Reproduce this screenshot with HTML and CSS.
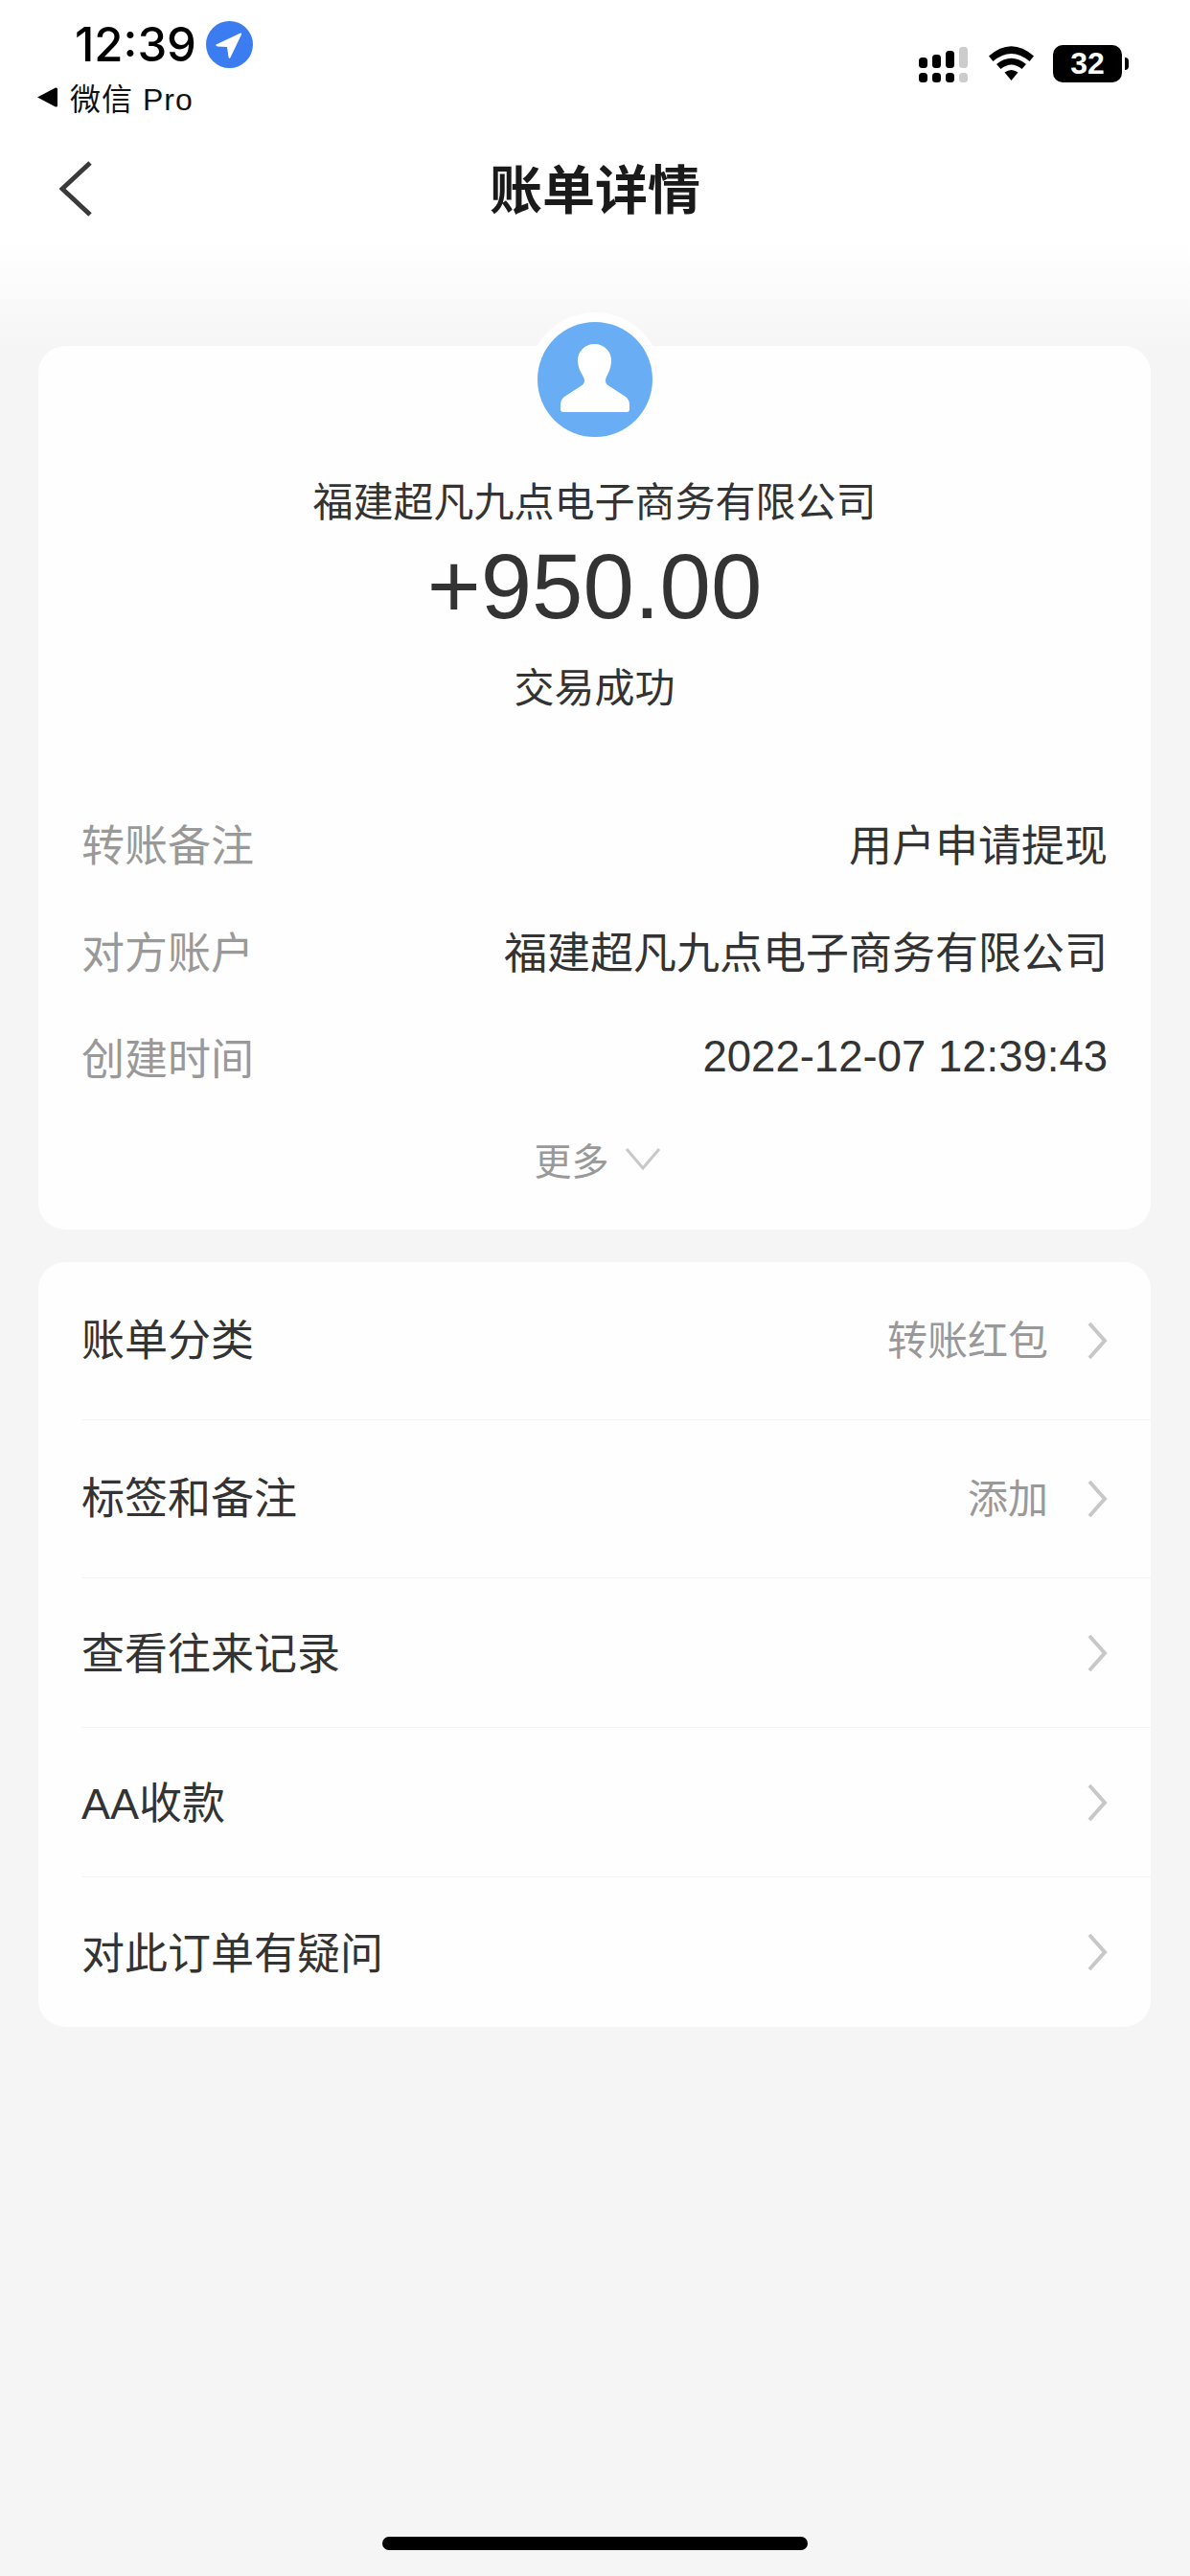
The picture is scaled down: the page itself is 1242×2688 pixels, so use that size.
FILE: index.html
```html
<!DOCTYPE html>
<html lang="zh-CN">
<head>
    <meta charset="UTF-8">
    <meta name="viewport" content="width=device-width, initial-scale=1.0">
    <title>账单详情</title>
    <link rel="stylesheet" href="styles.css">
</head>
<body>
    <div class="page">
        <header class="top">
            <div class="status">
                <div class="status-left">
                    <div class="clock-line">
                        <span class="clock">12:39</span>
                        <svg class="loc" width="49" height="49" viewBox="0 0 49 49">
                            <circle cx="24.5" cy="24.5" r="24.5" fill="#3b7cf0"></circle>
                            <path d="M10.5 24.5 L36 12.5 Q38 12 37 14 L25.5 38 Q24 40 23.5 37.5 L22 27 L12 26.5 Q9.5 25.5 10.5 24.5 Z" fill="#fff"></path>
                        </svg>
                    </div>
                    <div class="back-app">
                        <svg width="21" height="21" viewBox="0 0 21 21"><path d="M0 10.5 L19 0.5 Q21 0 21 2 L21 19 Q21 21 19 20.5 Z" fill="#000"></path></svg>
                        <span>微信 Pro</span>
                    </div>
                </div>
                <div class="status-right">
                    <svg width="51" height="38" viewBox="0 0 51 38">
                        <rect x="0" y="12" width="9" height="11" rx="3.5"></rect>
                        <rect x="14" y="9" width="9" height="14" rx="3.5"></rect>
                        <rect x="28" y="5" width="9" height="18" rx="3.5"></rect>
                        <rect x="42" y="1" width="9" height="22" rx="3.5" fill="#ccc"></rect>
                        <rect x="0" y="28" width="9" height="10" rx="3.5"></rect>
                        <rect x="14" y="28" width="9" height="10" rx="3.5"></rect>
                        <rect x="28" y="28" width="9" height="10" rx="3.5"></rect>
                        <rect x="42" y="28" width="9" height="10" rx="3.5" fill="#ccc"></rect>
                    </svg>
                    <svg class="wifi" width="47" height="36" viewBox="0 0 47 36">
                        <path d="M0 10.5 Q23.5 -10 47 10.5 L42.5 16 Q23.5 0 4.5 16 Z"></path>
                        <path d="M8 19 Q23.5 6.5 39 19 L34.5 24 Q23.5 15 12.5 24 Z"></path>
                        <path d="M16.5 27.5 Q23.5 22.5 30.5 27.5 L23.5 36 Z"></path>
                    </svg>
                    <div class="battery"><span>32</span></div>
                    <div class="nub"></div>
                </div>
            </div>
            <div class="navbar">
                <svg class="nav-back" width="34" height="58" viewBox="0 0 34 58">
                    <path d="M32 2 L3 29 L32 56" fill="none" stroke="#3a3a3a" stroke-width="5"></path>
                </svg>
                <h1>账单详情</h1>
            </div>
        </header>

        <main class="content">
            <section class="card summary">
                <div class="avatar">
                    <svg width="120" height="120" viewBox="0 0 120 120">
                        <circle cx="60" cy="60" r="60" fill="#69aef5"></circle>
                        <path d="M59.5 23 C70 23 77 31 77 40 C77 50 72 56 71 60 C71 64 72 65 75 67 L92 78 Q96 81 96 87 L96 91 Q96 94 93 94 L27 94 Q24 94 24 91 L24 87 Q24 81 28 78 L45 67 C48 65 49 64 49 60 C48 56 42 50 42 40 C42 31 49 23 59.5 23 Z" fill="#fff"></path>
                    </svg>
                </div>
                <div class="payee">福建超凡九点电子商务有限公司</div>
                <div class="amount">+950.00</div>
                <div class="state">交易成功</div>
                <div class="details">
                    <div class="detail"><span class="detail-label">转账备注</span><span>用户申请提现</span></div>
                    <div class="detail"><span class="detail-label">对方账户</span><span>福建超凡九点电子商务有限公司</span></div>
                    <div class="detail"><span class="detail-label">创建时间</span><span class="detail-time">2022-12-07 12:39:43</span></div>
                </div>
                <div class="more">
                    <span>更多</span>
                    <svg width="38" height="26" viewBox="0 0 38 26"><path d="M2 3 L19 23 L36 3" fill="none" stroke="#c8c8c8" stroke-width="3"></path></svg>
                </div>
            </section>

            <section class="card menu">
                <div class="row row-tall">
                    <span class="row-name">账单分类</span>
                    <span class="row-value">转账红包</span>
                    <svg class="arrow" width="22" height="42" viewBox="0 0 22 42"><path d="M2 3 L18 21 L2 39" fill="none" stroke="#c8c8c8" stroke-width="4"></path></svg>
                </div>
                <div class="row row-tall">
                    <span class="row-name">标签和备注</span>
                    <span class="row-value">添加</span>
                    <svg class="arrow" width="22" height="42" viewBox="0 0 22 42"><path d="M2 3 L18 21 L2 39" fill="none" stroke="#c8c8c8" stroke-width="4"></path></svg>
                </div>
                <div class="row">
                    <span class="row-name">查看往来记录</span>
                    <svg class="arrow" width="22" height="42" viewBox="0 0 22 42"><path d="M2 3 L18 21 L2 39" fill="none" stroke="#c8c8c8" stroke-width="4"></path></svg>
                </div>
                <div class="row">
                    <span class="row-name">AA收款</span>
                    <svg class="arrow" width="22" height="42" viewBox="0 0 22 42"><path d="M2 3 L18 21 L2 39" fill="none" stroke="#c8c8c8" stroke-width="4"></path></svg>
                </div>
                <div class="row row-last">
                    <span class="row-name">对此订单有疑问</span>
                    <svg class="arrow" width="22" height="42" viewBox="0 0 22 42"><path d="M2 3 L18 21 L2 39" fill="none" stroke="#c8c8c8" stroke-width="4"></path></svg>
                </div>
            </section>
        </main>

        <div class="home-bar"></div>
    </div>
</body>
</html>
```

FILE: styles.css
```css
* { box-sizing: border-box; }
body {
    margin: 0;
    font-family: "Liberation Sans", "Noto Sans CJK SC", sans-serif;
    color: #333;
    background-color: #f5f5f5;
}
.page { height: 2688px; display: flex; flex-direction: column; overflow: hidden; }

/* top area */
.top { height: 361px; background: linear-gradient(#fff 0, #fff 255px, #f6f6f6 355px, #f6f6f6 100%); }
.status { height: 162px; display: flex; justify-content: space-between; padding: 21px 64px 0 39px; }
.status-left { display: flex; flex-direction: column; }
.clock-line { display: flex; align-items: center; gap: 10px; padding-left: 39px; height: 50px; }
.clock { font-family: Inter, "Liberation Sans", sans-serif; font-size: 49px; font-weight: 500; color: #000; }
.back-app { display: flex; align-items: center; gap: 13px; margin-top: 12px; height: 36px; font-size: 32px; color: #111; letter-spacing: 1px; }
.status-right { display: flex; align-items: flex-start; padding-top: 27px; }
.status-right svg { fill: #000; }
.wifi { margin-left: 22px; }
.battery { width: 72px; height: 39px; margin-left: 20px; margin-top: -1px; border-radius: 10px; background-color: #000; color: #fff; font-size: 32px; font-weight: bold; display: flex; align-items: center; justify-content: center; }
.nub { width: 4px; height: 13px; margin: 12px 0 0 3px; background-color: #000; border-radius: 0 6px 6px 0; }

.navbar { height: 70px; display: flex; align-items: center; justify-content: center; position: relative; }
.navbar h1 { margin: 0 0 6px; font-size: 55px; font-weight: bold; color: #1a1a1a; }
.nav-back { position: absolute; left: 62px; top: 6px; }

/* cards */
.content { padding: 0 41px 0 40px; display: flex; flex-direction: column; gap: 34px; }
.card { background-color: #fefefe; border-radius: 28px; }
.summary { height: 922px; position: relative; padding: 0 45px; }
.avatar { position: absolute; left: 50%; top: -35px; margin-left: -70px; width: 140px; height: 140px; border-radius: 50%; background-color: #fefefe; display: flex; align-items: center; justify-content: center; }
.payee { padding-top: 134px; text-align: center; font-size: 42px; line-height: 60px; }
.amount { text-align: center; font-size: 96px; line-height: 110px; margin-top: 2px; }
.state { text-align: center; font-size: 42px; line-height: 60px; margin-top: 22px; }
.details { margin-top: 75px; }
.detail { display: flex; justify-content: space-between; align-items: center; height: 111.5px; font-size: 45px; }
.detail-label { color: #999; }
.detail-time { font-size: 45.5px; }
.more { display: flex; align-items: center; justify-content: center; gap: 16px; margin-top: 22px; padding-left: 6px; font-size: 39px; color: #999; }

/* menu */
.menu { padding-left: 45px; }
.row { height: 156px; display: flex; align-items: center; padding-right: 44px; border-bottom: 1px solid #f3f3f3; font-size: 45px; }
.row-tall { height: 165px; }
.row-last { border-bottom: 0; }
.row-name { flex: 1; padding-bottom: 4px; }
.row-value { color: #999; font-size: 42px; margin-right: 41px; }
.row-tall .row-name, .row-tall .row-value { padding-bottom: 8px; }

.home-bar { margin: auto auto 27px; width: 444px; height: 14px; border-radius: 7px; background-color: #000; }
```
